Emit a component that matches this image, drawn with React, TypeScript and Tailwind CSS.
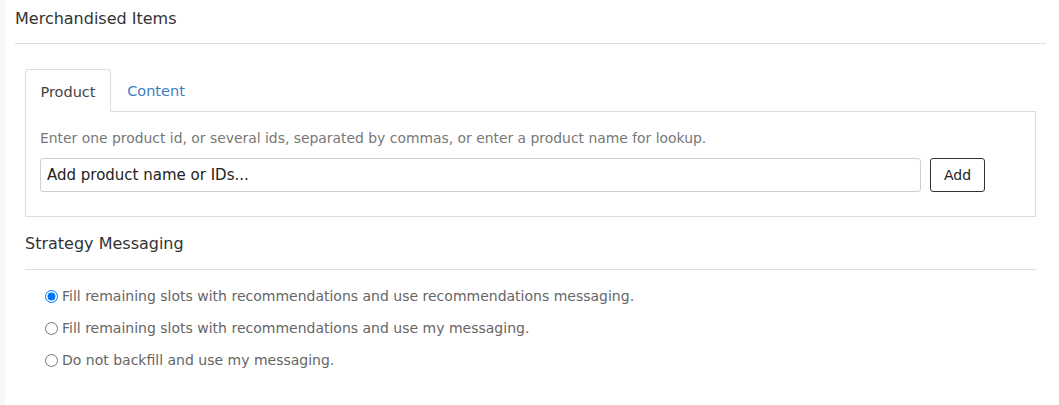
const options = [
  "Fill remaining slots with recommendations and use recommendations messaging.",
  "Fill remaining slots with recommendations and use my messaging.",
  "Do not backfill and use my messaging.",
];

export default function App() {
  return (
    <div className="flex h-[405px] w-[1059px] bg-white font-['DejaVu_Sans',sans-serif]">
      <div className="w-[5px] bg-[#f7f7f7]" />
      <div className="ml-[10px] w-[1031px]">
        <div className="flex h-[44px] items-center border-b border-[#dedede] pb-[10px] pt-[4px] text-[16px] text-[#333]">
          Merchandised Items
        </div>
        <div className="px-[10px] pt-[25px]">
          <div className="flex h-[42px] pt-[3px] text-[14.5px]">
            <div className="-mb-px -mt-[3px] flex w-[86px] items-center justify-center rounded-t-[3px] border border-b-0 border-[#dedede] bg-white pt-[3px] text-[#444]">
              Product
            </div>
            <div className="flex w-[90px] items-center justify-center text-[#3c7ec2]">Content</div>
          </div>
          <div className="h-[106px] border border-[#dedede] px-[14px] pt-[16px]">
            <p className="text-[13.9px] leading-[20px] text-[#777]">
              Enter one product id, or several ids, separated by commas, or enter a product name for lookup.
            </p>
            <div className="mt-[10px] flex items-center gap-[9px]">
              <div className="flex h-[34px] w-[881px] items-center rounded-[3px] border border-[#cfcfcf] px-[6px] text-[15px] text-[#222]">
                Add product name or IDs...
              </div>
              <button
                type="button"
                className="h-[34px] w-[55px] rounded-[3px] border border-[#333] text-[14px] text-[#222]"
              >
                Add
              </button>
            </div>
          </div>
          <div className="flex h-[53px] items-center border-b border-[#dedede] pt-[2px] text-[16px] text-[#333]">
            Strategy Messaging
          </div>
          <div className="flex flex-col gap-[12px] pl-[20px] pt-[16px]">
            {options.map((label, i) => (
              <label key={label} className="flex h-[20px] items-center gap-[4px] text-[14px] text-[#666]">
                <input type="radio" name="strategy" defaultChecked={i === 0} className="m-0 h-[13px] w-[13px]" />
                {label}
              </label>
            ))}
          </div>
        </div>
      </div>
    </div>
  );
}
